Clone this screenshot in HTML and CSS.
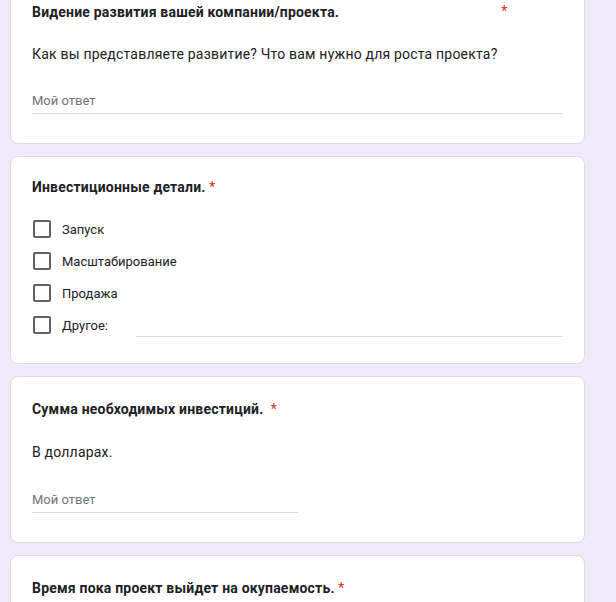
FILE: index.html
```html
<!DOCTYPE html>
<html lang="ru">
<head>
<meta charset="utf-8">
<title>Форма</title>
<link rel="stylesheet" href="styles.css">
</head>
<body>
<div class="list">
  <section class="card">
    <div class="title">Видение развития вашей компании/проекта.<span class="req req-far">*</span></div>
    <div class="desc">Как вы представляете развитие? Что вам нужно для роста проекта?</div>
    <div class="answer answer-long">Мой ответ</div>
  </section>

  <section class="card card-check">
    <div class="title">Инвестиционные детали. <span class="req">*</span></div>
    <div class="options">
      <div class="option"><span class="box"></span><span class="label">Запуск</span></div>
      <div class="option"><span class="box"></span><span class="label">Масштабирование</span></div>
      <div class="option"><span class="box"></span><span class="label">Продажа</span></div>
      <div class="option"><span class="box"></span><span class="label">Другое:</span><span class="other"></span></div>
    </div>
  </section>

  <section class="card card-roomy">
    <div class="title">Сумма необходимых инвестиций.&nbsp; <span class="req">*</span></div>
    <div class="desc">В долларах.</div>
    <div class="answer answer-short">Мой ответ</div>
  </section>

  <section class="card card-roomy">
    <div class="title">Время пока проект выйдет на окупаемость. <span class="req">*</span></div>
    <div class="desc">&nbsp;</div>
  </section>
</div>
</body>
</html>
```

FILE: styles.css
```css
html, body {
  margin: 0;
  padding: 0;
}
body {
  background: #f0ebf8;
  font-family: Roboto, "Noto Sans", Arial, sans-serif;
  color: #202124;
  overflow: hidden;
  height: 602px;
}
.list {
  display: flex;
  flex-direction: column;
  gap: 12px;
  width: 575px;
  margin-left: 10px;
  margin-top: -20px;
}
.card {
  background: #fff;
  border: 1px solid #dadce0;
  border-radius: 8px;
  padding: 21px 21px 29px 21px;
}
.card-check {
  padding-top: 20px;
  padding-bottom: 22px;
}
.card-roomy {
  padding-top: 22px;
}
.title {
  font-size: 14px;
  font-weight: 700;
  line-height: 20px;
  letter-spacing: 0.2px;
}
.req {
  color: #d93025;
  font-weight: 400;
}
.req-far {
  display: inline-block;
  margin-left: 162px;
  vertical-align: top;
  line-height: 18px;
}
.desc {
  margin-top: 22px;
  font-size: 14px;
  line-height: 20px;
  letter-spacing: 0.2px;
}
.card-roomy .desc {
  margin-top: 23px;
}
.answer {
  margin-top: 27px;
  font-size: 13px;
  line-height: 20px;
  color: #70757a;
  padding-bottom: 2px;
  border-bottom: 1px solid #dadce0;
}
.card-roomy .answer {
  margin-top: 28px;
}
.answer-short {
  width: 266px;
}
.options {
  margin-top: 16px;
  display: flex;
  flex-direction: column;
}
.option {
  height: 32px;
  display: flex;
  align-items: center;
  font-size: 13px;
}
.box {
  box-sizing: border-box;
  width: 18px;
  height: 18px;
  border: 2px solid #5f6368;
  border-radius: 2px;
  margin-left: 1px;
  flex: none;
}
.label {
  margin-left: 11px;
  color: #202124;
}
.other {
  flex: 1;
  align-self: flex-end;
  margin-left: 28px;
  margin-bottom: 4px;
  border-bottom: 1px solid #dadce0;
}
```
